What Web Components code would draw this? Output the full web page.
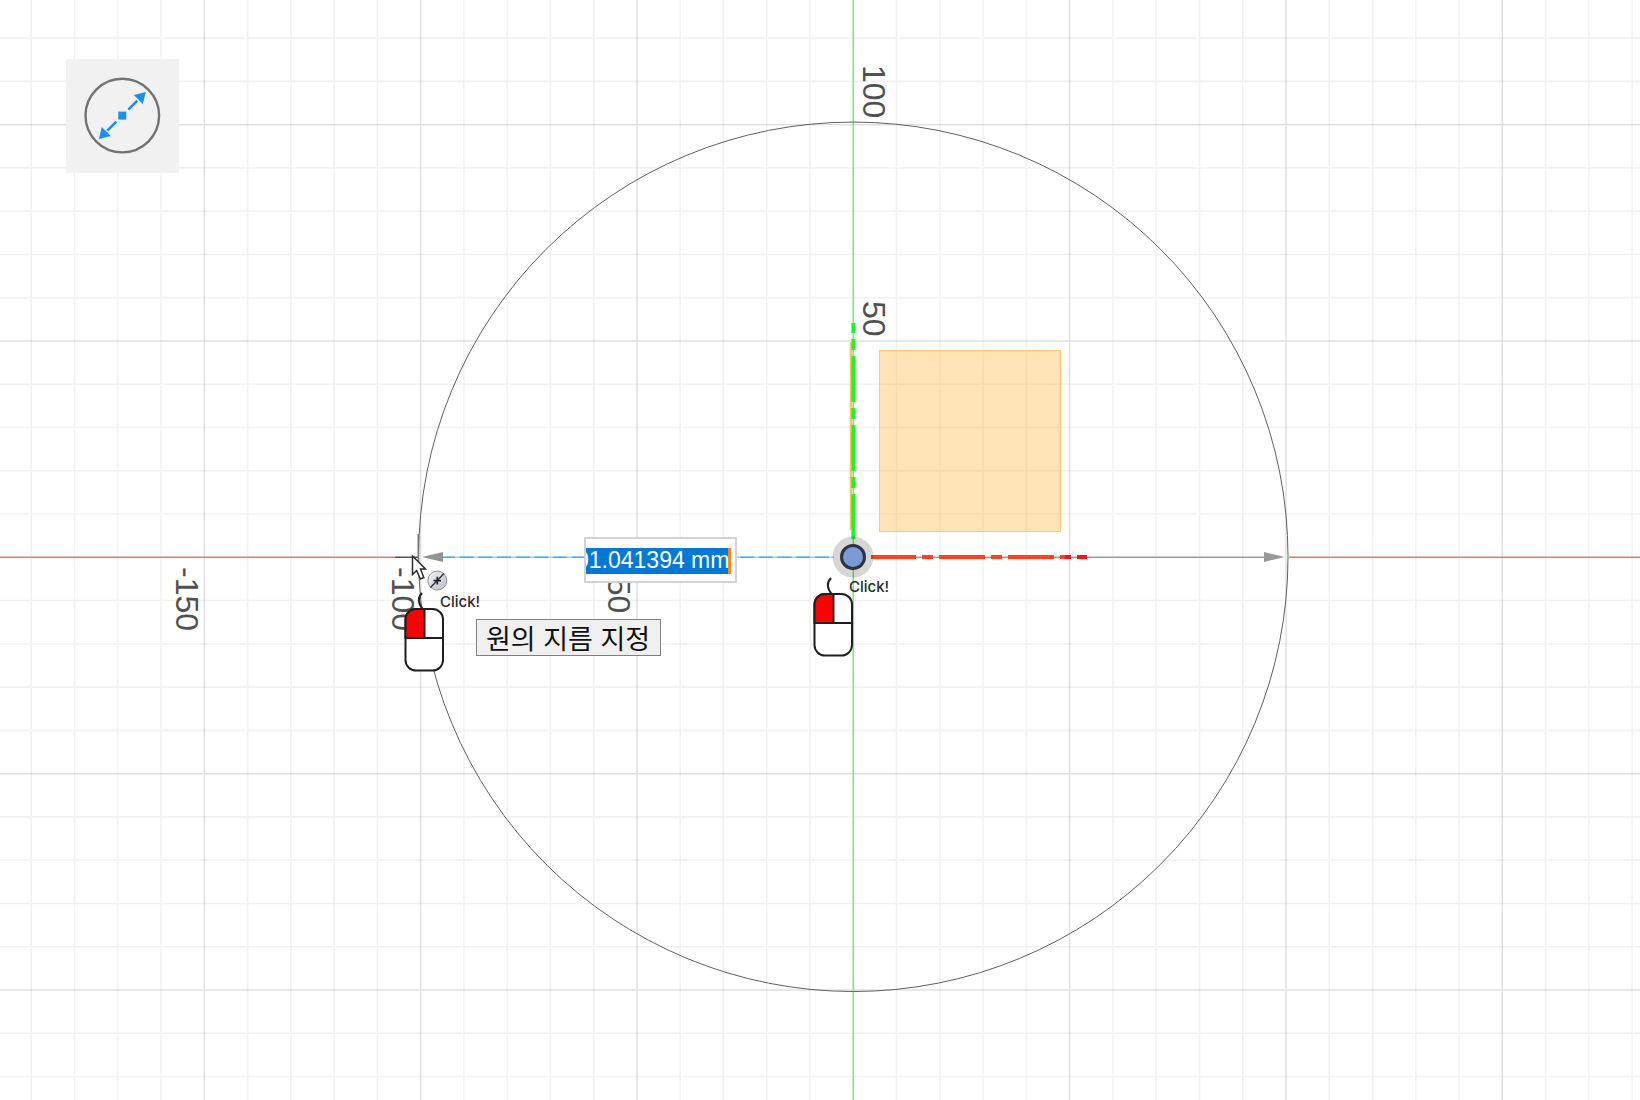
<!DOCTYPE html>
<html lang="ko">
<head>
<meta charset="utf-8">
<title>원의 지름 지정</title>
<style>
  body {
    margin: 0;
    background: #fff;
    font-family: "Liberation Sans", "Noto Sans CJK KR", sans-serif;
  }
</style>
</head>
<body>
<sketch-canvas>
  <tool-button slot="tool" label="지름 원"></tool-button>

  <axis-label style="--x: 5px; --y: -492px">100</axis-label>
  <axis-label style="--x: 5px; --y: -256px">50</axis-label>
  <axis-label style="--x: -250px; --y: 10px">-50</axis-label>
  <axis-label style="--x: -466px; --y: 10px">-100</axis-label>
  <axis-label style="--x: -682px; --y: 10px">-150</axis-label>

  <dimension-input style="--x: -269px; --y: -20px" value="01.041394 mm" label="지름"></dimension-input>
  <sketch-cursor style="--x: -443px; --y: -4px"></sketch-cursor>
  <mouse-click style="--x: -449px; --y: 34px">Click!</mouse-click>
  <mouse-click style="--x: -40px; --y: 19px">Click!</mouse-click>
  <hint-tip style="--x: -377px; --y: 62px">원의 지름 지정</hint-tip>
</sketch-canvas>

<script>
// Everything on the canvas is placed from the sketch origin.
const placed = `
  :host {
    position: absolute;
    left: var(--x);
    top: var(--y);
    display: block;
  }
`;

class SketchCanvas extends HTMLElement {
  constructor() {
    super();
    this.attachShadow({ mode: "open" });
  }

  connectedCallback() {
    this.render();
  }

  gridLines() {
    const step = 649 / 15;
    let minor = "";
    let major = "";

    for (let i = -60; i <= 60; i++) {
      if (i === 0) continue;
      const p = (i * step + 0.3).toFixed(2);
      const d = `M${p} -2600V2600M-2600 ${p}H2600`;
      if (i % 5 === 0) major += d;
      else minor += d;
    }

    return `
      <path d="${minor}" stroke="#000" stroke-opacity=".055" stroke-width="1.6"/>
      <path d="${major}" stroke="#000" stroke-opacity=".12" stroke-width="1.5"/>
    `;
  }

  render() {
    this.shadowRoot.innerHTML = `
      <style>
        :host {
          display: block;
          position: relative;
          min-height: 100vh;
          overflow: hidden;
          box-sizing: border-box;
          padding: 59px 66px;
        }

        .origin {
          position: absolute;
          left: calc(50% + 33px);
          top: calc(50% + 7px);
          width: 0;
          height: 0;
        }

        svg {
          position: absolute;
          left: 0;
          top: 0;
          width: 1px;
          height: 1px;
          overflow: visible;
        }

        ::slotted([slot="tool"]) {
          position: relative;
        }
      </style>
      <div class="origin">
        <svg fill="none" aria-hidden="true">
          ${this.gridLines()}

          <!-- axes -->
          <path d="M-2600 .2H-458M436 .2H2600" stroke="#e87474" stroke-width="1.5"/>
          <path d="M.3 -2600V2600" stroke="#84e080" stroke-width="1.6"/>

          <!-- origin plane, seen flat and edge-on -->
          <rect x="26.500" y="-206.500" width="181" height="181" fill="#fcb43c" fill-opacity=".37" stroke="#ffc05c" stroke-opacity=".8"/>
          <path d="M-2 -215V-27" stroke="#f9c468" stroke-width="2.500"/>
        </svg>
        <slot name="label"></slot>
        <svg fill="none" aria-hidden="true">
          <circle cx=".3" cy="-.2" r="434.700" stroke="#606060" stroke-width="1"/>

          <path d="M-458 .2H-435" stroke="#444" stroke-width="1.400"/>
          <path d="M-434.700 -23V17" stroke="#777" stroke-width="1.600"/>
          <path d="M-412 .2H-19" stroke="#a9cddb" stroke-width="1.500"/>
          <path d="M-412 .2H-19" stroke="#4fadd8" stroke-width="1.600" stroke-dasharray="14 4.700"/>
          <path d="M18 .3H412" stroke="#999" stroke-width="1.500"/>
          <path d="M-431 0L-410 -5V5Z" fill="#8d9496"/>
          <path d="M432 0L411 -5V5Z" fill="#999"/>

          <path d="M18 0H63M69 0H80M86 0H132M138 0H149M155 0H201M207 0H212" stroke="#ff4022" stroke-width="4"/>
          <path d="M212 0H218M224 0H234" stroke="#ff1018" stroke-width="4"/>
          <path d="M.4 -18V-63M.4 -69V-80M.4 -86V-132M.4 -138V-149M.4 -155V-201M.4 -207V-218M.4 -224V-234" stroke="#1ff51f" stroke-width="4"/>

          <circle r="20.500" fill="#000" fill-opacity=".16"/>
          <circle r="11.500" fill="#7b9bd6" stroke="#2d343d" stroke-width="3"/>
        </svg>
        <slot></slot>
      </div>
      <slot name="tool"></slot>
    `;

    // Axis labels sit under the circle and the dimension line.
    this.querySelectorAll("axis-label").forEach((el) => (el.slot = "label"));
  }
}

class ToolButton extends HTMLElement {
  constructor() {
    super();
    this.attachShadow({ mode: "open" });
  }

  connectedCallback() {
    const label = this.getAttribute("label") || "";

    this.shadowRoot.innerHTML = `
      <style>
        :host {
          display: block;
          width: max-content;
        }

        button {
          display: flex;
          align-items: center;
          justify-content: center;
          width: 113px;
          height: 114px;
          padding: 0;
          border: none;
          background: #f1f1f1;
          cursor: pointer;
        }
      </style>
      <button type="button" aria-label="${label}">
        <svg width="80" height="80" viewBox="-39.300 -39.600 80 80" fill="none" aria-hidden="true">
          <circle r="36.800" stroke="#737373" stroke-width="2.400"/>
          <rect x="-4" y="-4" width="8" height="8" fill="#1b8fea"/>
          <path d="M6 -6L15 -15M-6 6L-15 15" stroke="#1b8fea" stroke-width="2.600"/>
          <path d="M23.500 -23.500L20.500 -11.500L11.500 -20.500Z" fill="#1b8fea"/>
          <path d="M-23.500 23.500L-11.500 20.500L-20.500 11.500Z" fill="#1b8fea"/>
        </svg>
      </button>
    `;
  }
}

class AxisLabel extends HTMLElement {
  constructor() {
    super();
    this.attachShadow({ mode: "open" });
    this.shadowRoot.innerHTML = `
      <style>
        ${placed}
        :host {
          writing-mode: vertical-rl;
          font-size: 32px;
          line-height: 32px;
          white-space: nowrap;
          color: #505050;
        }
      </style>
      <slot></slot>
    `;
  }
}

class DimensionInput extends HTMLElement {
  constructor() {
    super();
    this.attachShadow({ mode: "open" });
  }

  connectedCallback() {
    const value = this.getAttribute("value") || "";
    const label = this.getAttribute("label") || "";

    this.shadowRoot.innerHTML = `
      <style>
        ${placed}
        input {
          display: block;
          box-sizing: border-box;
          width: 153px;
          height: 46px;
          margin: 0;
          padding: 0 6px 0 0;
          border: 2px solid #d3d3d3;
          border-radius: 0;
          outline: none;
          font: 23px "Liberation Sans", sans-serif;
          color: #fff;
          background:
            linear-gradient(#0078d7, #0078d7) 0 9px / 142px 26px no-repeat,
            linear-gradient(#f58426, #f58426) 142px 9px / 3px 26px no-repeat,
            #fff;
        }
      </style>
      <input type="text" value="${value}" aria-label="${label}">
    `;

    // Long values show their end, with the unit.
    const input = this.shadowRoot.querySelector("input");
    input.scrollLeft = input.scrollWidth;
  }
}

class SketchCursor extends HTMLElement {
  constructor() {
    super();
    this.attachShadow({ mode: "open" });
    this.shadowRoot.innerHTML = `
      <style>
        ${placed}
        svg {
          display: block;
        }
      </style>
      <svg width="40" height="40" fill="none" aria-hidden="true">
        <defs>
          <linearGradient id="disc" x1="0" y1="0" x2="1" y2="1">
            <stop offset="0" stop-color="#f4f5f8"/>
            <stop offset="1" stop-color="#b9bdc8"/>
          </linearGradient>
        </defs>
        <path d="M2.500 3V21.500L6.700 17.500L10.300 26L13.800 24.500L10.500 16H15.500Z" fill="#fff" stroke="#2b2b2b" stroke-width="1.500"/>
        <circle cx="27.300" cy="27.600" r="9.500" fill="url(#disc)" stroke="#8b8e95"/>
        <path d="M20.500 34.500L34 20.500" stroke="#333" stroke-width="1.400"/>
        <path d="M23.500 27.600H31M27.300 23.800V31.500" stroke="#222" stroke-width="1.700"/>
      </svg>
    `;
  }
}

class MouseClick extends HTMLElement {
  constructor() {
    super();
    this.attachShadow({ mode: "open" });
    this.shadowRoot.innerHTML = `
      <style>
        ${placed}
        :host {
          display: flex;
          align-items: flex-start;
          font: 500 15px/22px Inter, sans-serif;
          color: #2a2a2a;
        }

        svg {
          flex: none;
          margin-right: -4px;
        }
      </style>
      <svg width="40" height="82" fill="none" stroke="#1f1f1f" stroke-width="2" aria-hidden="true">
        <path d="M19 18.500C13 11 14 6 18 2"/>
        <rect x="1.500" y="18" width="37.500" height="61.500" rx="10.500" fill="#fff"/>
        <path d="M20.500 18H12A10.500 10.500 0 0 0 1.500 28.500V47H20.500Z" fill="#f00"/>
        <path d="M1.500 47H39"/>
      </svg>
      <slot></slot>
    `;
  }
}

class HintTip extends HTMLElement {
  constructor() {
    super();
    this.attachShadow({ mode: "open" });
    this.shadowRoot.innerHTML = `
      <style>
        ${placed}
        :host {
          box-sizing: border-box;
          width: max-content;
          padding: 0 10px 0 9px;
          border: 1px solid #808080;
          background: #f0f0f0;
          font: 27px/35px "Noto Sans CJK KR", sans-serif;
          color: #111;
        }
      </style>
      <slot></slot>
    `;
  }
}

customElements.define("sketch-canvas", SketchCanvas);
customElements.define("tool-button", ToolButton);
customElements.define("axis-label", AxisLabel);
customElements.define("dimension-input", DimensionInput);
customElements.define("sketch-cursor", SketchCursor);
customElements.define("mouse-click", MouseClick);
customElements.define("hint-tip", HintTip);
</script>
</body>
</html>
